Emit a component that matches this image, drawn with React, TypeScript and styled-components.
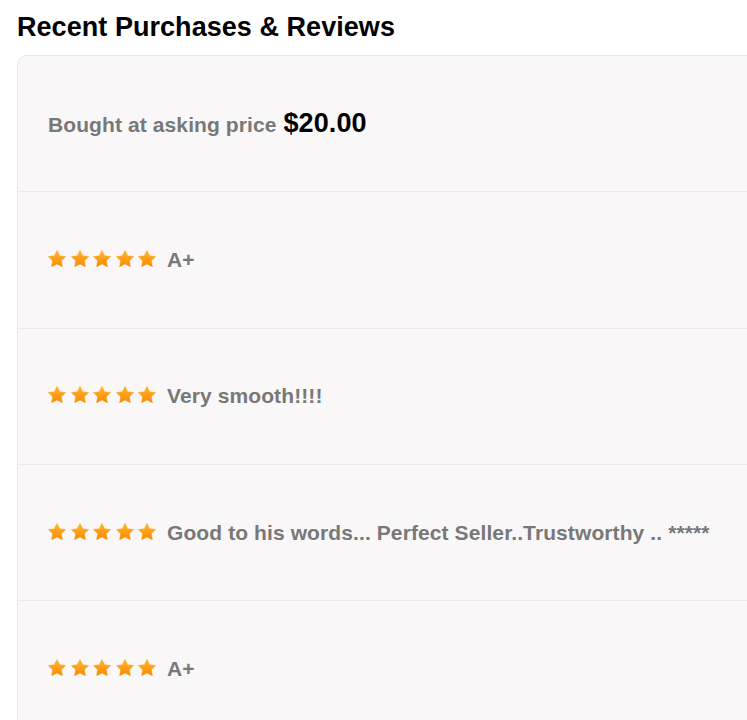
import React from "react";
import styled, { createGlobalStyle } from "styled-components";

const Global = createGlobalStyle`
  html, body { margin: 0; padding: 0; background: #ffffff; overflow-x: hidden; }
  body { font-family: "Liberation Sans", Arial, sans-serif; }
`;

const Page = styled.div`
  padding: 12px 0 0 17px;
`;

const Title = styled.h2`
  margin: 0 0 12px 0;
  font-size: 27px;
  font-weight: 700;
  line-height: 31px;
  letter-spacing: 0.05px;
  color: #000;
`;

const Card = styled.div`
  width: 780px;
  background: #f9f7f7;
  border: 1px solid #e8e6e6;
  border-radius: 10px;
  overflow: hidden;
`;

const Row = styled.div`
  display: flex;
  align-items: center;
  height: 135.3px;
  padding: 0 30px;
  border-bottom: 1px solid #ebe9e9;
  box-sizing: content-box;
`;

const Line = styled.div`
  font-size: 21px;
  font-weight: 700;
  letter-spacing: 0.1px;
  color: #787878;
  white-space: nowrap;
`;

const Price = styled.span`
  font-size: 27px;
  color: #000;
  margin-left: 1px;
`;

const Stars = styled.span`
  display: inline-flex;
  gap: 4.5px;
  margin-right: 11px;
  margin-bottom: 3px;
`;

const Review = styled.div`
  display: flex;
  align-items: center;
  font-size: 21px;
  font-weight: 700;
  letter-spacing: 0.1px;
  color: #787878;
  white-space: nowrap;
`;

const Star = ({ id }: { id: string }) => (
  <svg width="18" height="17" viewBox="0.3 0.2 23.4 22.3">
    <defs>
      <linearGradient id={id} x1="0" y1="0" x2="0" y2="1">
        <stop offset="0" stopColor="#ffb72e" />
        <stop offset="1" stopColor="#fa8800" />
      </linearGradient>
    </defs>
    <path
      d="M12 0.5 L15.53 7.65 L23.41 8.79 L17.71 14.35 L19.05 22.21 L12 18.5 L4.95 22.21 L6.29 14.35 L0.59 8.79 L8.47 7.65 Z"
      fill={`url(#${id})`}
      stroke={`url(#${id})`}
      strokeWidth="0.6"
      strokeLinejoin="round"
    />
  </svg>
);

const FiveStars = ({ k }: { k: number }) => (
  <Stars>
    {[0, 1, 2, 3, 4].map((i) => (
      <Star key={i} id={`g${k}-${i}`} />
    ))}
  </Stars>
);

const reviews = [
  "A+",
  "Very smooth!!!!",
  "Good to his words... Perfect Seller..Trustworthy .. *****",
  "A+",
];

export default function App() {
  return (
    <>
      <Global />
      <Page>
        <Title>Recent Purchases &amp; Reviews</Title>
        <Card>
          <Row>
            <Line>
              Bought at asking price <Price>$20.00</Price>
            </Line>
          </Row>
          {reviews.map((r, i) => (
            <Row key={i}>
              <Review>
                <FiveStars k={i} />
                {r}
              </Review>
            </Row>
          ))}
        </Card>
      </Page>
    </>
  );
}
